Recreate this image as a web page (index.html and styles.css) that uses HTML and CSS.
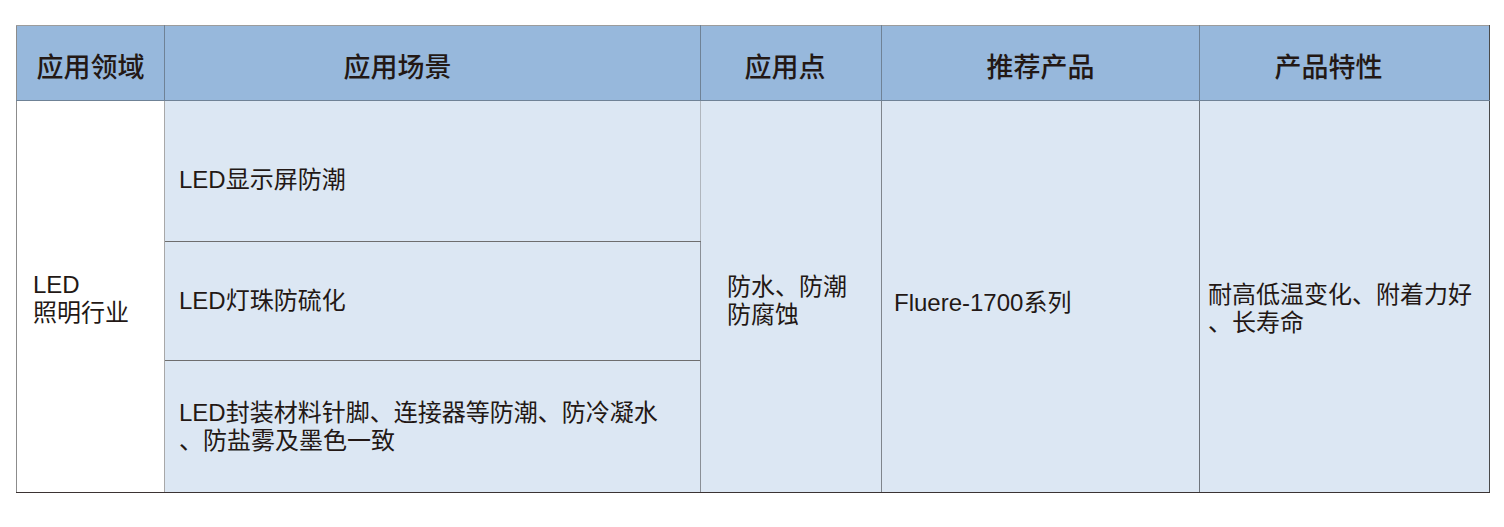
FILE: index.html
```html
<!DOCTYPE html>
<html lang="zh-CN">
<head>
<meta charset="utf-8">
<title>应用领域</title>
<link rel="stylesheet" href="styles.css">
</head>
<body>
<table class="spec">
  <colgroup>
    <col class="c1"><col class="c2"><col class="c3"><col class="c4"><col class="c5">
  </colgroup>
  <thead>
    <tr class="head">
      <th class="h1">应用领域</th>
      <th class="h2">应用场景</th>
      <th class="h3">应用点</th>
      <th class="h4">推荐产品</th>
      <th class="h5">产品特性</th>
    </tr>
  </thead>
  <tbody>
    <tr class="r1">
      <td rowspan="3" class="field">LED<br>照明行业</td>
      <td class="scene scene-1">LED显示屏防潮</td>
      <td rowspan="3" class="point">防水、防潮<br>防腐蚀</td>
      <td rowspan="3" class="product">Fluere-1700系列</td>
      <td rowspan="3" class="feature">耐高低温变化、附着力好<br>、长寿命</td>
    </tr>
    <tr class="r2">
      <td class="scene">LED灯珠防硫化</td>
    </tr>
    <tr class="r3">
      <td class="scene">LED封装材料针脚、连接器等防潮、防冷凝水<br>、防盐雾及墨色一致</td>
    </tr>
  </tbody>
</table>
</body>
</html>
```

FILE: styles.css
```css
html, body {
  margin: 0;
  padding: 0;
  background: #ffffff;
}

body {
  padding: 25px 0 0 16px;
  font-family: "Liberation Sans", "Noto Sans CJK SC", sans-serif;
  color: #231815;
}

.spec {
  border-collapse: collapse;
  table-layout: fixed;
  width: 1473px;
}

.c1 { width: 148px; }
.c2 { width: 536px; }
.c3 { width: 181px; }
.c4 { width: 318px; }
.c5 { width: 290px; }

.spec th,
.spec td {
  border: 1px solid #8a8f96;
  padding: 0;
  font-size: 24px;
  line-height: 28px;
  white-space: nowrap;
}

.head {
  height: 75px;
}

.head th {
  background: #97b8dc;
  font-size: 27px;
  font-weight: 500;
  text-align: center;
  vertical-align: middle;
  padding-top: 9px;
  border-color: #6f8296;
  border-top-color: #9c9c9c;
}

.head th.h1 {
  border-left-color: #8c8c8c;
}

.head th.h2 {
  padding-right: 70px;
}

.head th.h3 {
  padding-right: 12px;
}

.head th.h5 {
  padding-right: 32px;
  border-right-color: #4a4a4a;
}

.r1 { height: 141px; }
.r2 { height: 119px; }
.r3 { height: 132px; }

.spec td {
  background: #dce7f3;
  vertical-align: middle;
  text-align: left;
  border-bottom-color: #3b3333;
}

.spec td.field {
  background: #ffffff;
  padding-left: 16px;
  padding-top: 4px;
  border-left-color: #8c8c8c;
  border-right-color: #a8a8a8;
}

.spec td.scene {
  padding-left: 14px;
  border-bottom-color: #6e6e6e;
  border-right-color: #b0b6bd;
}

.spec td.scene-1 {
  padding-top: 18px;
}

.spec .r3 td.scene {
  border-bottom-color: #3b3333;
}

.spec td.point {
  padding-left: 26px;
  padding-top: 8px;
  border-right-color: #7f858c;
}

.spec td.product {
  padding-left: 12px;
  padding-top: 12px;
  border-right-color: #6f757c;
}

.spec td.feature {
  padding-left: 8px;
  padding-top: 24px;
  border-right-color: #4a4a4a;
}
```
